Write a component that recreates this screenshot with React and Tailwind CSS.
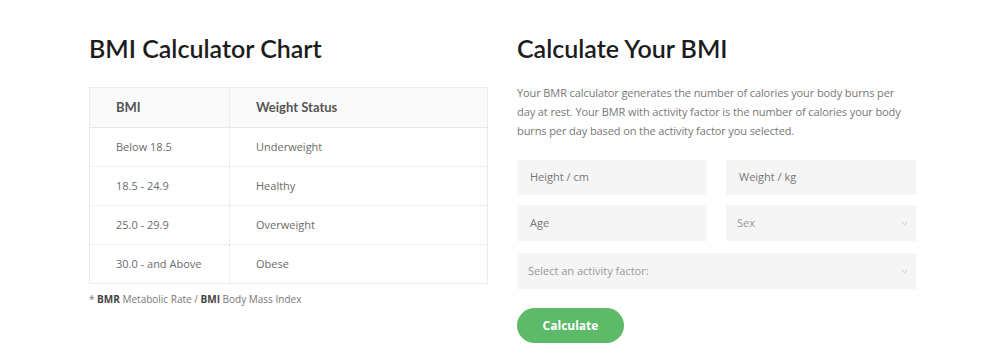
import { ChevronDown } from "lucide-react";

const rows = [
    ["Below 18.5", "Underweight"],
    ["18.5 - 24.9", "Healthy"],
    ["25.0 - 29.9", "Overweight"],
    ["30.0 - and Above", "Obese"],
];

const heading = { fontFamily: "Lato, 'DejaVu Sans', sans-serif" };
const body = { fontFamily: "'Open Sans', 'Liberation Sans', sans-serif" };

function App() {
    return (
        <div className="w-[1000px] h-[364px] bg-white overflow-hidden" style={body}>
            <div className="ml-[89px] w-[827px] pt-[33px] flex gap-[29px]">
                {/* Left: chart */}
                <div className="w-[399px]">
                    <h2 className="text-[25px] leading-[31px] font-semibold text-[#1c1c1c]" style={heading}>
                        BMI Calculator Chart
                    </h2>
                    <table className="mt-[23px] w-full border border-[#ececec] border-collapse">
                        <thead>
                            <tr className="bg-[#fafafa] h-[40px] border-b border-[#e8e8e8]">
                                <th className="w-[140px] pl-[26px] text-left text-[13px] font-bold text-[#555] border-r border-dotted border-[#e2e2e2]" style={heading}>BMI</th>
                                <th className="pl-[26px] text-left text-[13px] font-bold text-[#555]" style={heading}>Weight Status</th>
                            </tr>
                        </thead>
                        <tbody>
                            {rows.map(([bmi, status], i) => (
                                <tr key={bmi} className={`h-[39px] ${i < rows.length - 1 ? "border-b border-dotted border-[#e2e2e2]" : ""}`}>
                                    <td className="pl-[26px] text-[11px] text-[#6b6b6b] border-r border-dotted border-[#e2e2e2]">{bmi}</td>
                                    <td className="pl-[26px] text-[11px] text-[#6b6b6b]">{status}</td>
                                </tr>
                            ))}
                        </tbody>
                    </table>
                    <p className="mt-[8px] text-[10px] text-[#777]">
                        * <b className="text-[#444]">BMR</b> Metabolic Rate / <b className="text-[#444]">BMI</b> Body Mass Index
                    </p>
                </div>

                {/* Right: calculator */}
                <div className="w-[399px]">
                    <h2 className="text-[25px] leading-[31px] font-semibold text-[#1c1c1c]" style={heading}>
                        Calculate Your BMI
                    </h2>
                    <p className="mt-[19px] pr-[10px] text-[11px] leading-[19px] tracking-[-0.1px] text-[#777]">
                        Your BMR calculator generates the number of calories your body burns per day at rest. Your BMR with activity factor is the number of calories your body burns per day based on the activity factor you selected.
                    </p>
                    <div className="mt-[20px] grid grid-cols-2 gap-x-[19px] gap-y-[10px]">
                        <div className="h-[35px] bg-[#f5f5f5] flex items-center px-[13px] text-[11px] text-[#777]">Height / cm</div>
                        <div className="h-[35px] bg-[#f5f5f5] flex items-center px-[13px] text-[11px] text-[#777]">Weight / kg</div>
                        <div className="h-[36px] bg-[#f5f5f5] flex items-center px-[13px] text-[11px] text-[#777]">Age</div>
                        <div className="h-[36px] bg-[#f5f5f5] flex items-center justify-between pl-[11px] pr-[7px] text-[11px] text-[#999]">
                            <span>Sex</span>
                            <ChevronDown className="w-[9px] h-[9px] text-[#bbb]" strokeWidth={2} />
                        </div>
                    </div>
                    <div className="mt-[12px] h-[36px] bg-[#f5f5f5] flex items-center justify-between pl-[11px] pr-[7px] text-[11px] text-[#999]">
                        <span>Select an activity factor:</span>
                        <ChevronDown className="w-[9px] h-[9px] text-[#bbb]" strokeWidth={2} />
                    </div>
                    <button className="mt-[19px] w-[107px] h-[35px] rounded-full bg-[#5dba69] text-white text-[12px] font-bold">
                        Calculate
                    </button>
                </div>
            </div>
        </div>
    );
}

export default App;
